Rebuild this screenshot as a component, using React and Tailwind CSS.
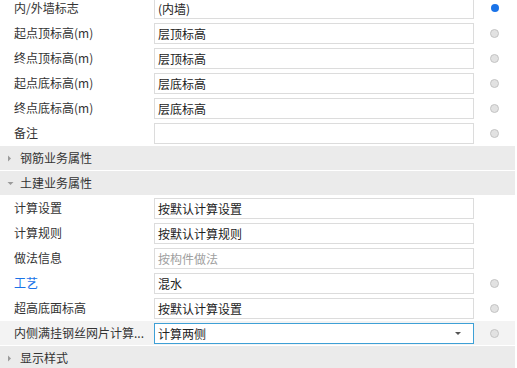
const font = "font-['Microsoft_YaHei','Noto_Sans_CJK_SC',sans-serif]";

function Dot({ kind }) {
  if (kind === "blue") return <span className="block w-[8px] h-[8px] rounded-full bg-[#1a73e8]" />;
  if (kind === "gray") return <span className="block w-[9px] h-[9px] rounded-full bg-[#e2e2e2] border border-[#c4c4c4]" />;
  return null;
}

function Row({ label, value, dot, blueLabel, placeholder, selected, dropdown }) {
  return (
    <div className={`flex h-[25px] border-b border-white ${selected ? "bg-[#f3f3f3]" : "bg-white"}`}>
      <div className={`w-[154px] shrink-0 pl-[14px] leading-[24px] whitespace-nowrap overflow-hidden ${blueLabel ? "text-[#1a73e8]" : "text-[#333]"}`}>
        {label}
      </div>
      <div className="pt-[2px]">
        <div
          className={`w-[320px] h-[21px] flex items-center px-[3px] bg-white border ${
            selected ? "border-[#3ea0d6] w-[319px]" : "border-[#dcdcdc]"
          } ${placeholder ? "text-[#a0a0a0]" : "text-[#222]"}`}
        >
          <span className="flex-1 leading-[19px] whitespace-nowrap">{value}</span>
          {dropdown && (
            <svg width="8" height="5" viewBox="0 0 8 5" className="mr-[8px]">
              <path d="M1 1h6L4 4z" fill="#555" />
            </svg>
          )}
        </div>
      </div>
      <div className="flex-1 flex items-center justify-center">
        <Dot kind={dot} />
      </div>
    </div>
  );
}

function Header({ label, open }) {
  return (
    <div className="flex items-center h-[25px] bg-[#ebebeb] border-b border-white">
      <div className="w-[20px] flex justify-center">
        {open ? (
          <svg width="7" height="5" viewBox="0 0 7 5" className="mt-[1px]">
            <path d="M0.5 1h6L3.5 4z" fill="#9a9a9a" />
          </svg>
        ) : (
          <svg width="5" height="7" viewBox="0 0 5 7" className="-ml-[2px]">
            <path d="M1 0.5v6L4 3.5z" fill="#9a9a9a" />
          </svg>
        )}
      </div>
      <span className="text-[#333] leading-[24px]">{label}</span>
    </div>
  );
}

export default function App() {
  return (
    <div className={`w-[517px] h-[368px] overflow-hidden bg-white text-[12px] ${font}`}>
      <div className="-mt-[4px] w-[515px]">
        <Row label="内/外墙标志" value="(内墙)" dot="blue" />
        <Row label="起点顶标高(m)" value="层顶标高" dot="gray" />
        <Row label="终点顶标高(m)" value="层顶标高" dot="gray" />
        <Row label="起点底标高(m)" value="层底标高" dot="gray" />
        <Row label="终点底标高(m)" value="层底标高" dot="gray" />
        <Row label="备注" value="" dot="gray" />
        <Header label="钢筋业务属性" />
        <Header label="土建业务属性" open />
        <Row label="计算设置" value="按默认计算设置" />
        <Row label="计算规则" value="按默认计算规则" />
        <Row label="做法信息" value="按构件做法" placeholder />
        <Row label="工艺" value="混水" dot="gray" blueLabel />
        <Row label="超高底面标高" value="按默认计算设置" dot="gray" />
        <Row label="内侧满挂钢丝网片计算..." value="计算两侧" dot="gray" selected dropdown />
        <Header label="显示样式" />
      </div>
    </div>
  );
}
